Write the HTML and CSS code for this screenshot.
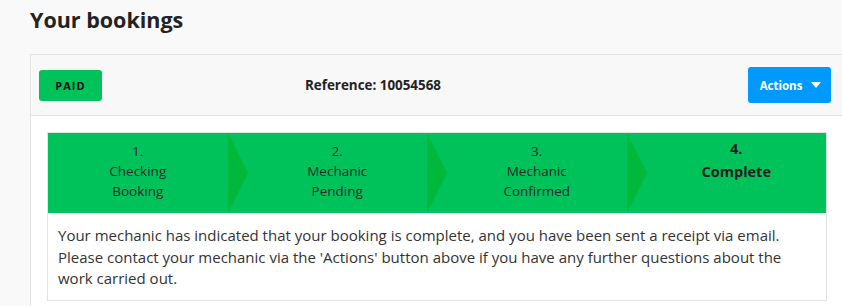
FILE: index.html
```html
<!DOCTYPE html>
<html lang="en">
<head>
    <meta charset="UTF-8">
    <title>Your bookings</title>
    <link rel="stylesheet" href="styles.css">
</head>
<body>

<h1 class="page-title">Your bookings</h1>

<div class="booking-card">
    <div class="booking-header">
        <span class="status-badge">PAID</span>
        <span class="booking-ref">Reference: 10054568</span>
        <button class="actions-btn">Actions <span class="caret"></span></button>
    </div>

    <div class="booking-body">
        <div class="progress-box">
            <div class="steps">
                <div class="step">1.<br>Checking<br>Booking</div>
                <div class="step-arrow"></div>
                <div class="step">2.<br>Mechanic<br>Pending</div>
                <div class="step-arrow"></div>
                <div class="step">3.<br>Mechanic<br>Confirmed</div>
                <div class="step-arrow"></div>
                <div class="step step-active">4.<br>Complete</div>
            </div>
            <p class="status-text">Your mechanic has indicated that your booking is complete, and you have been sent a receipt via email.<br>Please contact your mechanic via the 'Actions' button above if you have any further questions about the<br>work carried out.</p>
        </div>
    </div>
</div>

</body>
</html>
```

FILE: styles.css
```css
body { margin: 0; padding-left: 30px; background: #f9f9f9; font-family: "Open Sans", Lato, sans-serif; color: #222; overflow: hidden; }

.page-title { margin: 7px 0 21px; font-size: 21.5px; line-height: 26px; font-weight: 700; color: #222; }

.booking-card { width: 820px; border: 1px solid #e3e3e3; background: #fff; }
.booking-header { display: flex; align-items: center; height: 60px; padding: 0 20px 0 8px; background: #f8f8f8; border-bottom: 1px solid #e3e3e3; }

.status-badge { display: inline-block; width: 63px; height: 31px; line-height: 31px; text-align: center; background: #00c25a; border-radius: 3px; font-size: 11px; font-weight: 700; letter-spacing: 1px; color: #111; }
.booking-ref { margin-left: 203px; font-size: 13.4px; font-weight: 700; color: #222; }

.actions-btn { margin-left: auto; width: 83px; height: 36px; padding: 0 0 0 2px; border: 0; border-radius: 3px; background: #0099ff; color: #fff; font-family: inherit; font-size: 11.5px; font-weight: 700; }
.caret { display: inline-block; margin-left: 6px; vertical-align: 2px; border-top: 6px solid #fff; border-left: 5px solid transparent; border-right: 5px solid transparent; }

.booking-body { padding: 16px 16px 6px; }
.progress-box { width: 778px; border: 1px solid #e3e3e3; }

.steps { display: flex; height: 80px; background: #00c25a; }
.step { flex: 1; padding-top: 8px; text-align: center; font-size: 13.5px; line-height: 20px; color: #2a2a2a; }
.step-active { padding-top: 4px; font-size: 14.5px; line-height: 23px; font-weight: 700; color: #1e1e1e; }
.step-arrow { width: 0; height: 0; border-left: 20px solid #00b83a; border-top: 40px solid transparent; border-bottom: 40px solid transparent; }

.status-text { margin: 0; padding: 12px 10px 10px; font-size: 15px; line-height: 21.7px; color: #333; white-space: nowrap; }
```
